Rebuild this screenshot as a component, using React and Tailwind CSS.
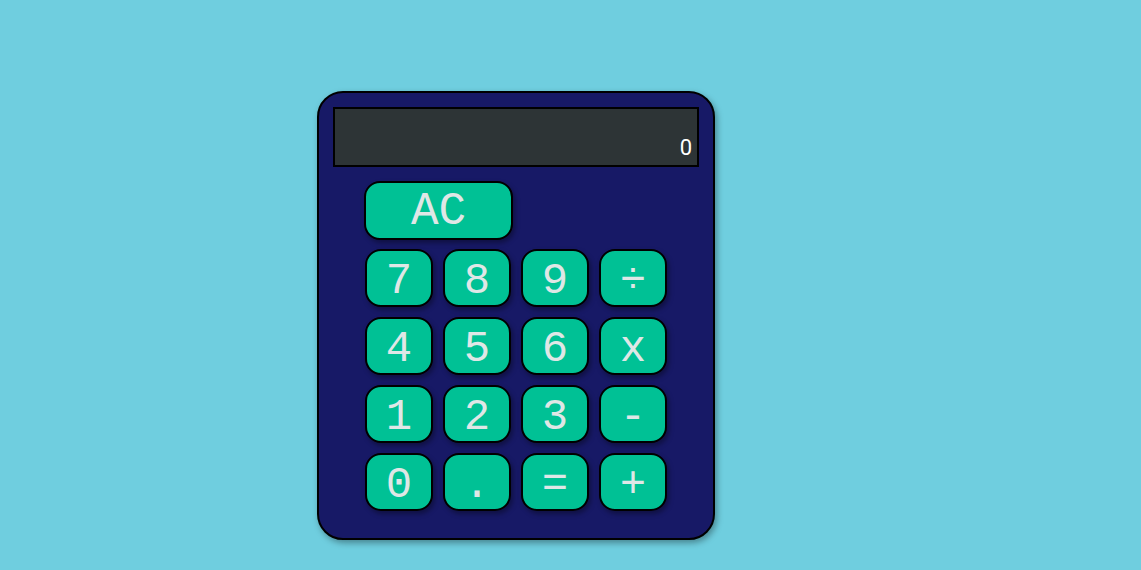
export default function App() {
  const keys = ["7", "8", "9", "÷", "4", "5", "6", "x", "1", "2", "3", "-", "0", ".", "=", "+"];
  return (
    <div className="min-h-[570px] w-full bg-[#6fcedf] pt-[91px] pl-[317px]">
      <div className="w-[398px] h-[449px] rounded-[26px] border-2 border-black bg-[#171966] shadow-[2px_3px_6px_rgba(0,0,0,0.35)] px-[14px] pt-[14px]">
        <div className="h-[60px] w-[366px] border-2 border-black bg-[#2d3436] flex items-end justify-end pr-[5px] pb-[4px] text-[22px] leading-[26px] text-white font-['Roboto',sans-serif]">
          0
        </div>
        <div className="mx-auto w-[302px] mt-[14px] font-['Liberation_Mono','DejaVu_Sans_Mono',monospace]">
          <button className="h-[59px] w-[149px] rounded-[16px] border-2 border-black bg-[#00c195] text-[#dfe7e6] text-[46px] leading-none shadow-[2px_3px_5px_rgba(0,0,0,0.35)] -ml-px pt-[3px]">
            AC
          </button>
          <div className="grid grid-cols-4 gap-[10px] mt-[9px]">
            {keys.map((k) => (
              <button
                key={k}
                className="h-[58px] w-[68px] rounded-[16px] border-2 border-black bg-[#00c195] text-[#dfe7e6] text-[44px] leading-none shadow-[2px_3px_5px_rgba(0,0,0,0.35)] flex items-center justify-center pt-[6px]"
              >
                {k}
              </button>
            ))}
          </div>
        </div>
      </div>
    </div>
  );
}
